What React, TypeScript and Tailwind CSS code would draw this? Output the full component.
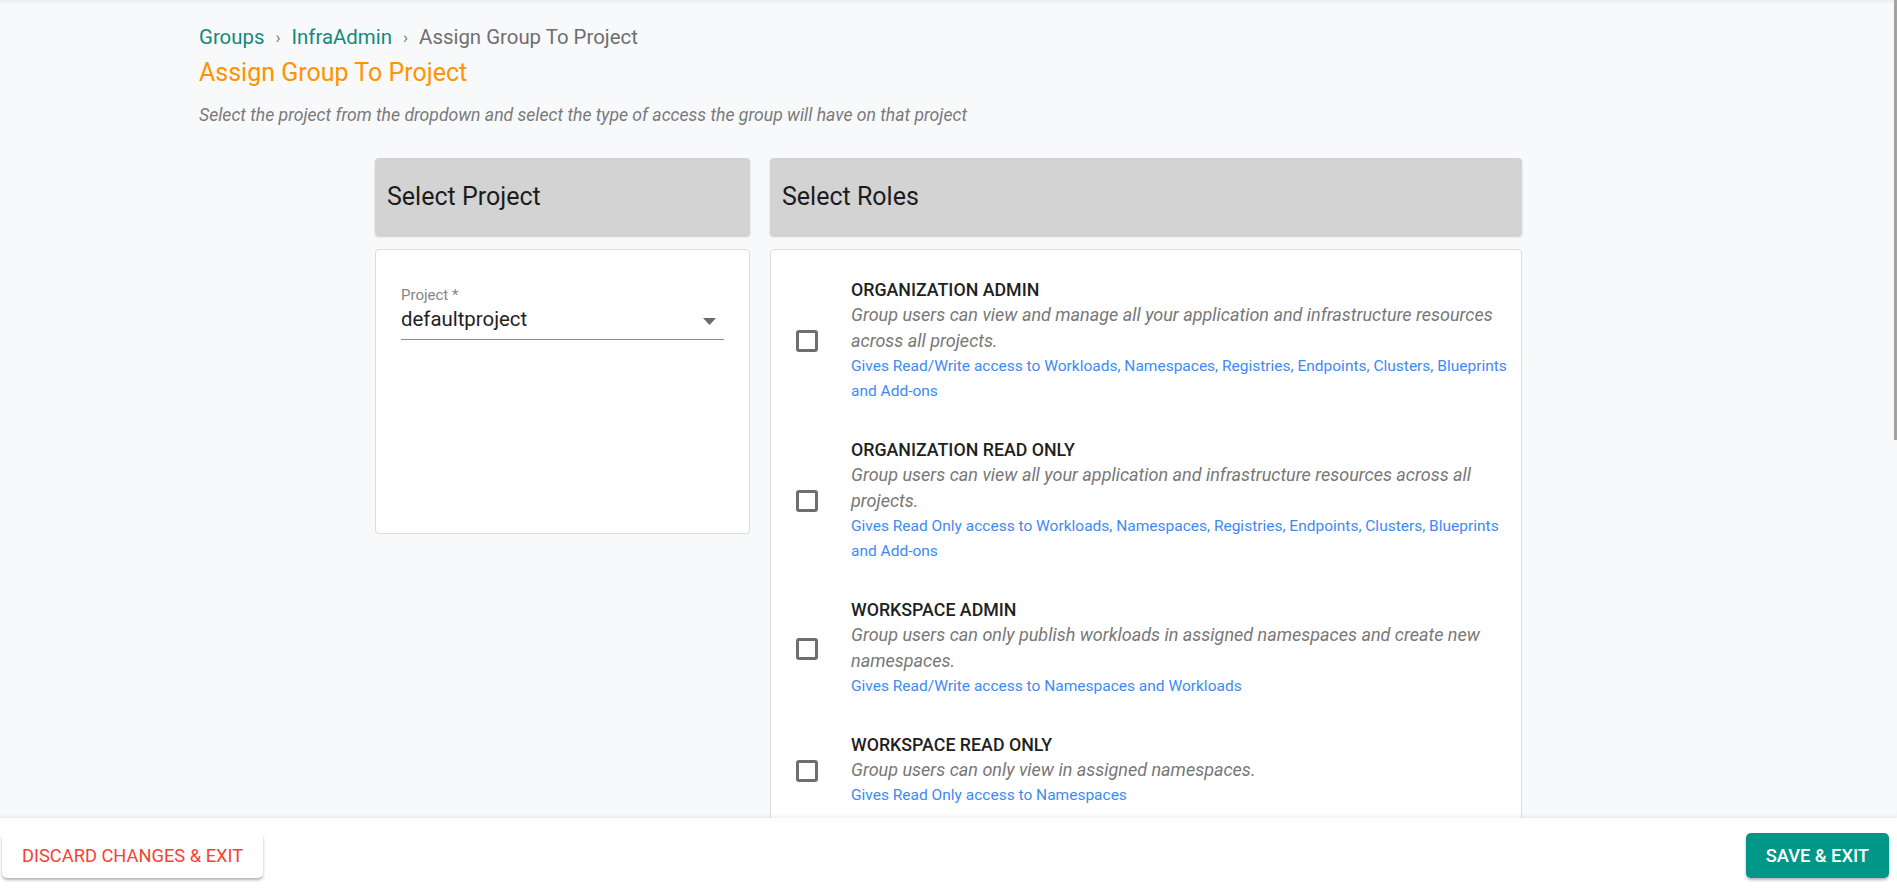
import React from 'react'

interface Role {
  title: string
  description: string
  access: string
}

const roles: Role[] = [
  {
    title: 'ORGANIZATION ADMIN',
    description: 'Group users can view and manage all your application and infrastructure resources across all projects.',
    access: 'Gives Read/Write access to Workloads, Namespaces, Registries, Endpoints, Clusters, Blueprints and Add-ons',
  },
  {
    title: 'ORGANIZATION READ ONLY',
    description: 'Group users can view all your application and infrastructure resources across all projects.',
    access: 'Gives Read Only access to Workloads, Namespaces, Registries, Endpoints, Clusters, Blueprints and Add-ons',
  },
  {
    title: 'WORKSPACE ADMIN',
    description: 'Group users can only publish workloads in assigned namespaces and create new namespaces.',
    access: 'Gives Read/Write access to Namespaces and Workloads',
  },
  {
    title: 'WORKSPACE READ ONLY',
    description: 'Group users can only view in assigned namespaces.',
    access: 'Gives Read Only access to Namespaces',
  },
]

function PanelHeader({ title }: { title: string }) {
  return (
    <div className="h-[77px] flex items-center pl-[12px] bg-[#d3d3d3] rounded-[4px] shadow-[0_2px_2px_rgba(0,0,0,0.18)]">
      <h2 className="text-[25px] text-[#1c1c1c]">{title}</h2>
    </div>
  )
}

function RoleRow({ role }: { role: Role }) {
  return (
    <div className="flex items-center">
      <div className="w-[22px] h-[22px] border-[3px] border-[#6e6e6e] rounded-[3px] shrink-0" />
      <div className="ml-[33px] w-[658px]">
        <div className="text-[17.8px] leading-[24px] font-medium text-[#1f1f1f]">{role.title}</div>
        <div className="text-[18px] leading-[26px] italic text-[#777]">{role.description}</div>
        <div className="text-[15.5px] leading-[25px] text-[#3d8af7]">{role.access}</div>
      </div>
    </div>
  )
}

export default function App() {
  return (
    <div className="h-screen flex flex-col bg-[#f8f9fb]" style={{ fontFamily: 'Roboto, "Noto Sans", sans-serif' }}>
      <main className="flex-1 relative overflow-hidden shadow-[inset_0_4px_4px_-3px_rgba(0,0,0,0.08)]">
        <div className="pl-[199px] pt-[24px]">
          <div className="flex items-center text-[20.4px] leading-[26px]">
            <span className="text-[#13897c]">Groups</span>
            <span className="mx-[11px] text-[#777] text-[17px]">›</span>
            <span className="text-[#13897c]">InfraAdmin</span>
            <span className="mx-[11px] text-[#777] text-[17px]">›</span>
            <span className="text-[#6f6f6f]">Assign Group To Project</span>
          </div>
          <h1 className="mt-[8px] text-[25px] leading-[30px] text-[#ff9300]">Assign Group To Project</h1>
          <p className="mt-[16px] text-[17.6px] leading-[22px] italic text-[#7a7a7a]">
            Select the project from the dropdown and select the type of access the group will have on that project
          </p>
        </div>

        <div className="flex justify-center gap-[20px] mt-[32px]">
          <div className="w-[375px] flex flex-col gap-[14px]">
            <PanelHeader title="Select Project" />
            <div className="h-[285px] bg-white border border-[#dcdcdc] rounded-[4px] px-[25px] pt-[36px]">
              <div className="text-[15px] leading-[18px] text-[#858585]">Project *</div>
              <div className="flex items-center justify-between h-[36px] pb-[4px] border-b border-[#8a8a8a]">
                <span className="text-[20.4px] text-[#1f1f1f]">defaultproject</span>
                <svg width="13" height="7" viewBox="0 0 13 7" className="mr-[8px] mt-[4px]">
                  <path d="M0 0 L13 0 L6.5 7 Z" fill="#6b6b6b" />
                </svg>
              </div>
            </div>
          </div>

          <div className="w-[752px] flex flex-col gap-[14px]">
            <PanelHeader title="Select Roles" />
            <div className="bg-white border border-[#dcdcdc] rounded-[4px] pl-[25px] pt-[28px] pb-[200px] flex flex-col gap-[34px]">
              {roles.map((role) => (
                <RoleRow key={role.title} role={role} />
              ))}
            </div>
          </div>
        </div>

        <div className="absolute right-0 top-0 w-[3px] h-[440px] bg-[#a3a3a3]" />
      </main>

      <footer className="h-[75px] shrink-0 bg-white flex items-center justify-between pl-[2px] pr-[8px] shadow-[0_-2px_4px_rgba(0,0,0,0.06)] z-10">
        <button className="h-[45px] px-[20px] bg-white rounded-[5px] text-[18.3px] text-[#f44336] shadow-[0_2px_3px_rgba(0,0,0,0.3)]">
          DISCARD CHANGES &amp; EXIT
        </button>
        <button className="h-[45px] px-[20px] bg-[#009688] rounded-[5px] text-[18.3px] font-medium text-white shadow-[0_2px_3px_rgba(0,0,0,0.3)]">
          SAVE &amp; EXIT
        </button>
      </footer>
    </div>
  )
}
